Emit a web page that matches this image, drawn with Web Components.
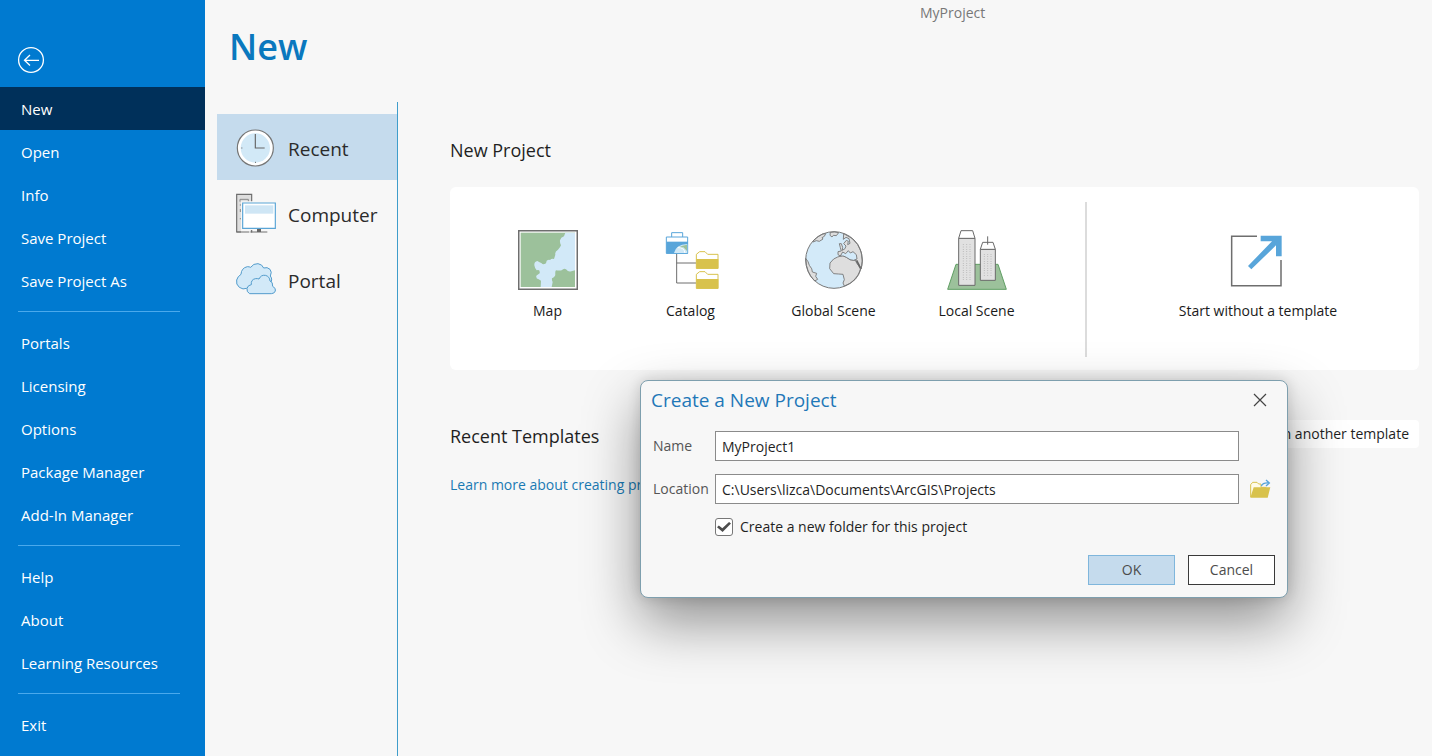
<!DOCTYPE html>
<html lang="en">
<head>
<meta charset="utf-8">
<title>MyProject</title>
<style>
  html, body { margin: 0; height: 100%; }
  body { font: 15px/20px "Open Sans", "Noto Sans", sans-serif; color: #1f1f1f; background: #f7f7f7; }
</style>
</head>
<body>
<project-backstage></project-backstage>

<template id="t-backstage">
  <style>
    :host { display: flex; min-height: 100vh; position: relative; overflow: hidden; }
    side-menu { flex: 0 0 205px; }
    main { flex: 1; min-width: 0; display: flex; flex-direction: column; }
    header { display: grid; grid-template-columns: 691px 1fr; padding-left: 24px; height: 102px; box-sizing: border-box; }
    h1 { margin: 22px 0 0; font-size: 36px; line-height: 50px; font-weight: 600; color: #0a78be; }
    header span { padding-top: 3px; font-size: 14px; color: #777; }
    .body { flex: 1; display: flex; }
    source-list { flex: 0 0 181px; margin-left: 12px; }
    .content { flex: 1; min-width: 0; padding: 36px 13px 24px 52px; }
    h2 { margin: 0; font-size: 18px; line-height: 24px; font-weight: 400; }
    .card { display: flex; margin-top: 25px; height: 183px; background: #fff; border-radius: 6px; box-sizing: border-box; padding: 15px 0 13px 26px; }
    .tiles { display: flex; padding-right: 37px; border-right: 2px solid #dcdcdc; }
    .tiles template-tile { width: 143px; }
    .blank { flex: 1; margin-left: 10px; }
    .row { display: flex; justify-content: space-between; align-items: center; margin-top: 50px; height: 28px; }
    .row h2 { padding-top: 4px; }
    .other { font: inherit; font-size: 14px; color: inherit; border: 0; border-radius: 4px; background: #fff; height: 28px; padding: 0 10px; }
    a { display: inline-block; margin-top: 27px; font-size: 14px; color: #1a7ab3; text-decoration: none; }
    new-project-dialog { position: absolute; left: 640px; top: 380px; }
  </style>
  <side-menu></side-menu>
  <main>
    <header><h1>New</h1><span>MyProject</span></header>
    <div class="body">
      <source-list></source-list>
      <section class="content">
        <h2>New Project</h2>
        <div class="card">
          <div class="tiles">
            <template-tile>
              <svg slot="icon" viewBox="54 60 180 180"><rect x="56" y="62" width="176" height="176" fill="#fff" stroke="#6e6e6e" stroke-width="5"/><rect x="62" y="68" width="163" height="163" fill="#9cc19b"/><path fill="#d2e9f8" d="M225 68H196L192 79Q182 82 180 91Q179 98 183 106Q181 112 174 119Q164 124 166 134L162 147Q155 145 150 150Q146 148 140 152L138 160Q129 166 125 160Q116 155 112 153Q102 155 103 166Q104 174 110 181Q121 177 119 190L109 197Q107 207 116 208L123 212L122 231H155L158 216Q155 211 156 205Q166 201 166 193Q165 183 168 181Q178 182 185 181Q192 173 198 178Q205 187 214 184L225 181Z"/></svg>
              Map
            </template-tile>
            <template-tile>
              <svg slot="icon" viewBox="480 60 180 180"><path fill="none" stroke="#6e6e6e" stroke-width="3" d="M527 131V219H585M527 159H585"/><path fill="#fff" stroke="#58a5da" stroke-width="3" d="M512 81V68H545V81M496 81H560V130H496Z"/><path fill="#58a5da" d="M496 95H561V131H496Z"/><path fill="#cfe8f6" d="M519 129Q524 104 559 102V129Z"/><path fill="#9cc19b" d="M531 113Q544 105 558 104V123L547 112Z"/><path stroke="#fff" stroke-width="3" fill="none" d="M530 113Q549 111 552 129"/><g fill="#fff" stroke="#d8c24c" stroke-width="3"><path d="M586 175V133L596 125H612L620 133H651V175Z"/><path d="M586 235V193L596 185H612L620 193H651V235Z"/></g><path fill="#d8c24c" d="M586 147H652V176H586ZM586 207H652V236H586Z"/></svg>
              Catalog
            </template-tile>
            <template-tile>
              <svg slot="icon" viewBox="72 60 180 180"><circle cx="162" cy="150" r="85" fill="#d3eaf9"/><g fill="#dedede" stroke="#737373" stroke-width="2.6" stroke-linejoin="round"><path d="M77 145Q86 155 88 166Q98 177 97 186L110 190L107 199L113 208L104 213Q79 190 77 145Z"/><path d="M99 94Q109 81 127 72L137 71L133 79L126 83L129 87L118 94L109 92L99 96Z"/><path d="M151 67Q165 64 176 68L169 77L160 76L156 81L150 76Z"/><path d="M191 71Q247 94 247 154L244 176L236 163L229 154L225 148L215 149L203 142L197 137L186 134L181 138L174 134V125L184 123L181 113L178 101L184 101L188 112L187 121L195 116L198 108L191 101L199 91L205 94L203 104L210 100L207 86L198 82L190 88Z"/><path d="M173 141L187 137L199 141L210 149L226 151L231 161L242 175Q235 214 193 228L189 219L193 209L189 193L176 192L161 191L149 176L150 159L161 147Z"/></g><path fill="#d3eaf9" stroke="#737373" stroke-width="2.6" d="M181 138L188 126L197 131L205 122L211 129L219 125L229 134L231 147L221 151L210 149L199 142L190 138Z"/><path d="M230 151L242 176" stroke="#666" stroke-width="5"/><circle cx="162" cy="150" r="85" fill="none" stroke="#777" stroke-width="3"/></svg>
              Global Scene
            </template-tile>
            <template-tile>
              <svg slot="icon" viewBox="501 60 180 180"><path fill="#9cc19b" stroke="#5f9e63" stroke-width="3" d="M528 163H654L679 238H503Z"/><g fill="#e1e1e1" stroke="#6a6a6a" stroke-width="3"><path d="M536 85H585V226H536ZM601 118H646V211H601Z"/><path fill="#fff" d="M536 85L543 62H578L585 85ZM601 118L608 97H639L646 118Z"/><path fill="none" d="M623 79V104"/></g><path d="M550 103V210M560 103V210M570 103V210M613 132V198M623 132V198M633 132V198" stroke="#aaa" stroke-width="3" stroke-dasharray="2 5"/></svg>
              Local Scene
            </template-tile>
          </div>
          <template-tile class="blank">
            <svg slot="icon" viewBox="504 150 180 180"><path fill="none" stroke="#6e6e6e" stroke-width="4.5" d="M591 169H515V317H663V240"/><path fill="#58a5da" d="M602 167H665V229H648V196L574 268L564 258L636 184H602Z"/></svg>
            Start without a template
          </template-tile>
        </div>
        <div class="row"><h2>Recent Templates</h2><button class="other">Start from another template</button></div>
        <a href="#templates">Learn more about creating project templates</a>
      </section>
    </div>
  </main>
  <new-project-dialog></new-project-dialog>
</template>

<template id="t-menu">
  <style>
    :host { display: block; background: #007ad0; color: #fff; }
    .back { display: block; margin: 47px 0 14px 18px; width: 26px; height: 26px; border: 0; padding: 0; background: none; }
    .back svg { display: block; width: 26px; height: 26px; overflow: visible; }
    nav a { display: block; line-height: 43px; height: 43px; padding: 1px 21px 0; box-sizing: border-box; color: #fff; text-decoration: none; white-space: nowrap; }
    nav a[aria-current] { background: #00305a; }
    hr { border: 0; height: 1px; margin: 9px 25px 9px 18px; background: #4aa9ec; }
  </style>
  <button class="back" aria-label="Back"><svg viewBox="0 0 26 26" fill="none" stroke="#fff" stroke-width="1.3"><circle cx="13" cy="13" r="12.4"/><path d="M21 13.3H6.5M12 8L6.5 13.3L12 18.500"/></svg></button>
  <nav>
    <a href="#new" aria-current="page">New</a><a href="#open">Open</a><a href="#info">Info</a><a href="#save">Save Project</a><a href="#saveas">Save Project As</a>
    <hr>
    <a href="#portals">Portals</a><a href="#licensing">Licensing</a><a href="#options">Options</a><a href="#packages">Package Manager</a><a href="#addins">Add-In Manager</a>
    <hr>
    <a href="#help">Help</a><a href="#about">About</a><a href="#learning">Learning Resources</a>
    <hr>
    <a href="#exit">Exit</a>
  </nav>
</template>

<template id="t-sources">
  <style>
    :host { display: block; border-right: 1px solid #3f9dcb; box-sizing: border-box; padding-top: 12px; }
    a { display: flex; align-items: center; gap: 12px; height: 66px; padding-left: 19px; color: #2b2b2b; font-size: 19px; line-height: 24px; text-decoration: none; }
    a[aria-current] { background: #c5dbed; }
    svg { width: 40px; height: 40px; }
    span { padding-top: 3px; }
  </style>
  <a href="#recent" aria-current="true"><svg viewBox="708 379 120 120"><circle cx="766" cy="442" r="54" fill="#fff" stroke="#757575" stroke-width="3.500"/><circle cx="766" cy="442" r="44" fill="#d2e9f7"/><path d="M766 400V442H794" fill="none" stroke="#666" stroke-width="3.500"/><path d="M765 485h3M724 442h3" stroke="#666" stroke-width="3"/></svg><span>Recent</span></a>
  <a href="#computer"><svg viewBox="708 580 120 120"><path d="M710 584H755V697H710Z" fill="#dedede" stroke="#6e6e6e" stroke-width="3.500"/><path d="M720 606V599H745V606M721 614V618M721 628V637M721 655V659" fill="none" stroke="#888" stroke-width="3"/><path fill="#f7f7f7" d="M723 605H828V691H751V700H723Z"/><path d="M710 697H748M753 697H802M777 686V697" stroke="#6e6e6e" stroke-width="3"/><path d="M771 687H783V697H771Z" fill="#666"/><path d="M728 610H826V686H728Z" fill="#fff" stroke="#5aa5d6" stroke-width="3.500"/><path d="M735 617H820V642H735Z" fill="#cfe6f5"/></svg><span>Computer</span></a>
  <a href="#portal"><svg viewBox="708 776 120 120"><g fill="#d2e9f8" stroke="#539ccc" stroke-width="3" stroke-linejoin="round"><path d="M740 864Q729 869 718 861Q707 852 710 839Q713 828 723 822Q724 803 742 799Q748 799 752 801Q760 789 774 790Q787 792 791 803Q802 799 810 807Q817 815 811 827Q820 838 809 852L785 868Z"/><path d="M749 880Q739 875 741 864Q744 854 754 853Q752 838 766 835Q772 834 777 836Q783 823 796 825Q809 828 810 842Q819 844 818 858Q829 864 826 872Q823 880 814 880Z"/></g></svg><span>Portal</span></a>
</template>

<template id="t-tile">
  <style>
    :host { display: block; }
    button { display: flex; flex-direction: column; align-items: center; width: 100%; height: 100%; border: 0; padding: 28px 0 0; background: none; font: inherit; font-size: 14px; line-height: 20px; color: #1a1a1a; white-space: nowrap; }
    ::slotted(svg) { display: block; width: 60px; height: 60px; margin-bottom: 11px; }
  </style>
  <button><slot name="icon"></slot><span><slot></slot></span></button>
</template>

<template id="t-dialog">
  <style>
    :host { display: block; width: 648px; box-sizing: border-box; border: 1px solid #7e9fae; border-radius: 8px; background: #f7f7f7; box-shadow: 0 24px 56px rgba(0,0,0,.42), 0 0 14px rgba(0,0,0,.14); font-size: 14px; color: #1f1f1f; }
    header { display: flex; justify-content: space-between; align-items: center; height: 38px; padding: 0 19px 0 10px; }
    h2 { margin: 0; font-size: 19px; line-height: 24px; font-weight: 400; color: #1f78b8; }
    button { font: inherit; padding: 0; border-radius: 0; }
    .icon { border: 0; background: none; display: flex; }
    .fields { display: grid; grid-template-columns: 62px 524px 32px; row-gap: 13px; align-items: center; margin: 12px 0 0 12px; }
    .fields label { color: #555; }
    input[type=text] { height: 30px; box-sizing: border-box; border: 1px solid #8b8b8b; padding: 0 6px; background: #fff; font: inherit; color: inherit; border-radius: 0; }
    .fields .icon { margin-left: 11px; }
    .check { display: flex; align-items: center; gap: 7px; margin: 13px 0 0 74px; height: 20px; }
    input[type=checkbox] { appearance: none; margin: 0; width: 18px; height: 18px; border: 1px solid #777; border-radius: 3px; background: #fff; box-sizing: border-box; display: grid; place-items: center; }
    input[type=checkbox]:checked::before { content: ""; width: 14px; height: 10px; background: #4d4d4d; clip-path: polygon(0 52%, 13% 36%, 38% 62%, 86% 0, 100% 16%, 40% 100%); }
    footer { display: flex; justify-content: flex-end; gap: 13px; margin: 18px 12px 12px; }
    footer button { width: 87px; height: 30px; border: 1px solid #3a3a3a; background: #fff; color: #4c4c4c; }
    footer .ok { background: #c5dbed; border-color: #7fb6dc; }
  </style>
  <form role="dialog" aria-labelledby="title">
    <header><h2 id="title">Create a New Project</h2><button type="button" class="icon" aria-label="Close"><svg width="16" height="16" viewBox="0 0 16 16"><path d="M2 2L14 14M14 2L2 14" stroke="#444" stroke-width="1.2"/></svg></button></header>
    <div class="fields">
      <label for="name">Name</label><input type="text" id="name" value="MyProject1"><span></span>
      <label for="loc">Location</label><input type="text" id="loc" value="C:\Users\lizca\Documents\ArcGIS\Projects">
      <button type="button" class="icon" aria-label="Browse"><svg width="21" height="20" viewBox="869 325 63 60"><path d="M871 379V342L877 335H890L895 340H902V350H918" fill="#fffbe8" stroke="#d8c24c" stroke-width="3"/><path d="M880 350H930L922 381H870Z" fill="#d8c24c"/><path d="M903 346Q908 335 926 337M917 328L927 337L917 346" fill="none" stroke="#58a5da" stroke-width="4"/></svg></button>
    </div>
    <div class="check"><input type="checkbox" id="folder" checked><label for="folder">Create a new folder for this project</label></div>
    <footer><button type="button" class="ok">OK</button><button type="button">Cancel</button></footer>
  </form>
</template>

<script>
  function define(name, templateId) {
    customElements.define(name, class extends HTMLElement {
      constructor() {
        super();
        this.attachShadow({ mode: 'open' })
          .append(document.getElementById(templateId).content.cloneNode(true));
      }
    });
  }
  define('side-menu', 't-menu');
  define('source-list', 't-sources');
  define('template-tile', 't-tile');
  define('new-project-dialog', 't-dialog');
  define('project-backstage', 't-backstage');
</script>
</body>
</html>
